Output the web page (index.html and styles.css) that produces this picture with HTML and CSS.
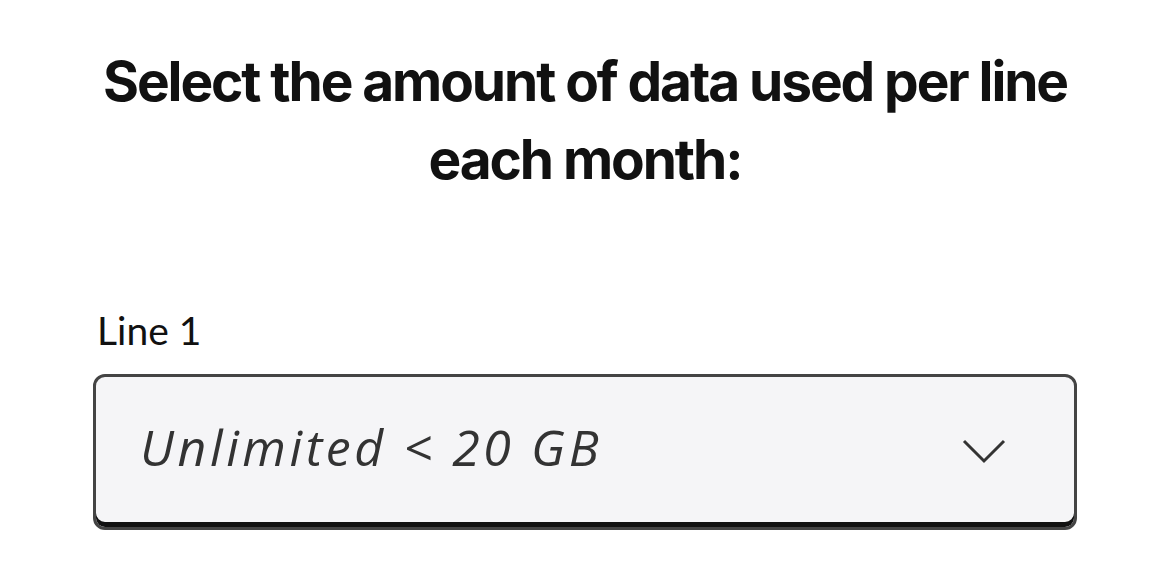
FILE: index.html
```html
<!DOCTYPE html>
<html lang="en">
<head>
<meta charset="utf-8">
<title>Data per line</title>
<link rel="stylesheet" href="styles.css">
</head>
<body>
<main class="page">
  <h1 class="title">Select the amount of data used per line each month:</h1>
  <div class="field">
    <label class="label" for="line1">Line 1</label>
    <div class="select" id="line1">
      <span class="value">Unlimited &lt; 20 GB</span>
      <svg class="chevron" width="44" height="26" viewBox="0 0 44 26" aria-hidden="true">
        <path d="M2 2 L22 22 L42 2" fill="none" stroke="#333" stroke-width="3"/>
      </svg>
    </div>
  </div>
</main>
</body>
</html>
```
FILE: styles.css
```css
html, body {
  margin: 0;
  padding: 0;
  background: #fff;
}
.page {
  padding: 42px 93px 0;
  display: flex;
  flex-direction: column;
}
.title {
  margin: 0;
  font-family: Inter, "Liberation Sans", sans-serif;
  font-weight: 700;
  font-size: 55px;
  line-height: 78px;
  letter-spacing: -0.038em;
  text-align: center;
  color: #111;
}
.field {
  margin-top: 108px;
  display: flex;
  flex-direction: column;
  gap: 20px;
}
.label {
  font-family: Lato, "Liberation Sans", sans-serif;
  font-size: 39px;
  line-height: 48px;
  color: #111;
  padding-left: 4px;
}
.select {
  height: 156px;
  box-sizing: border-box;
  border: 3px solid #444;
  border-radius: 12px;
  background: #f5f5f7;
  box-shadow: inset 0 -5px 0 #111;
  display: flex;
  align-items: center;
  justify-content: space-between;
  padding: 0 68px 0 44px;
}
.value {
  font-family: "Open Sans", "Liberation Sans", sans-serif;
  font-style: italic;
  font-size: 50px;
  letter-spacing: 3.6px;
  color: #333;
  margin-bottom: 10px;
}
.chevron {
  display: block;
}
```
